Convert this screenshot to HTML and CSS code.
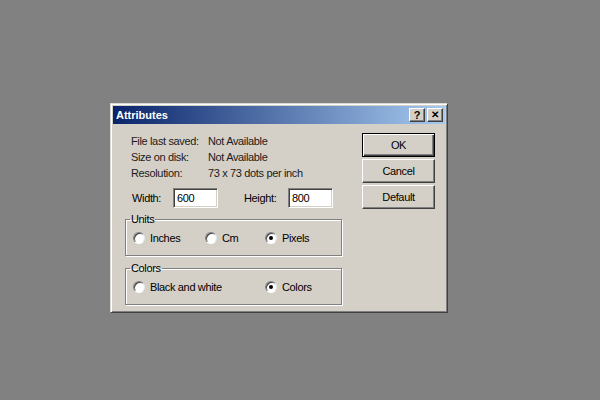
FILE: index.html
```html
<!DOCTYPE html>
<html>
<head>
<meta charset="utf-8">
<link rel="stylesheet" href="styles.css">
</head>
<body>
<div class="dialog">
  <div class="titlebar">
    <span class="title">Attributes</span>
    <div class="tbtns">
      <span class="tbtn">?</span>
      <span class="tbtn x">✕</span>
    </div>
  </div>
  <div class="content">
    <div class="left">
      <div class="info">
        <span>File last saved:</span><span>Not Available</span>
        <span>Size on disk:</span><span>Not Available</span>
        <span>Resolution:</span><span>73 x 73 dots per inch</span>
      </div>
      <div class="dims">
        <label class="lw">Width:</label><span class="input">600</span>
        <label class="lh">Height:</label><span class="input">800</span>
      </div>
      <fieldset class="group">
        <legend>Units</legend>
        <div class="radios">
          <span class="radio r1"><i class="dot"></i>Inches</span>
          <span class="radio r2"><i class="dot"></i>Cm</span>
          <span class="radio r3"><i class="dot on"></i>Pixels</span>
        </div>
      </fieldset>
      <fieldset class="group">
        <legend>Colors</legend>
        <div class="radios">
          <span class="radio r4"><i class="dot"></i>Black and white</span>
          <span class="radio r3"><i class="dot on"></i>Colors</span>
        </div>
      </fieldset>
    </div>
    <div class="buttons">
      <span class="btn default">OK</span>
      <span class="btn">Cancel</span>
      <span class="btn">Default</span>
    </div>
  </div>
</div>
</body>
</html>
```

FILE: styles.css
```css
html, body { margin: 0; padding: 0; }
body {
  background: #818181;
  width: 600px;
  height: 400px;
  padding: 103px 0 0 110px;
  box-sizing: border-box;
  font-family: "Liberation Sans", Arial, sans-serif;
  font-size: 11px;
  letter-spacing: -0.35px;
  color: #000;
}
.dialog {
  width: 338px;
  height: 210px;
  box-sizing: border-box;
  background: #d4d0c8;
  border: 1px solid;
  border-color: #dcdad4 #404040 #404040 #dcdad4;
  box-shadow: inset 1px 1px 0 #fff, inset -1px -1px 0 #808080;
  padding: 2px;
}
.titlebar {
  height: 18px;
  background: linear-gradient(to right, #0a246a, #a6caf0);
  display: flex;
  align-items: center;
  justify-content: space-between;
  padding: 0 2px 0 3px;
}
.title {
  color: #fff;
  font-weight: bold;
  font-size: 11px;
  letter-spacing: 0;
}
.tbtns { display: flex; gap: 2px; }
.tbtn {
  width: 16px;
  height: 14px;
  box-sizing: border-box;
  background: #d4d0c8;
  border: 1px solid;
  border-color: #fff #404040 #404040 #fff;
  box-shadow: inset -1px -1px 0 #808080;
  display: flex;
  align-items: center;
  justify-content: center;
  font-weight: bold;
  font-size: 11px;
  line-height: 1;
  letter-spacing: 0;
}
.tbtn.x { font-size: 10px; }
.content {
  display: flex;
  justify-content: space-between;
  padding: 9px 10px 0 12px;
}
.left { width: 217px; }
.info {
  display: grid;
  grid-template-columns: 77px auto;
  line-height: 16px;
  padding-left: 6px;
  color: #1a1a1a;
}
.dims {
  display: flex;
  align-items: center;
  margin-top: 7px;
  padding-left: 7px;
}
.lw { width: 41px; }
.lh { width: 44px; margin-left: 26px; }
.input {
  width: 45px;
  height: 20px;
  box-sizing: border-box;
  background: #fff;
  border: 1px solid;
  border-color: #808080 #fff #fff #808080;
  box-shadow: inset 1px 1px 0 #404040, inset -1px -1px 0 #d4d0c8;
  padding: 3px 0 0 3px;
}
.group {
  margin: 6px 0 0 0;
  padding: 0;
  height: 42px;
  box-sizing: border-box;
  border: 1px solid #808080;
  box-shadow: 1px 1px 0 #fff, inset 1px 1px 0 #fff;
}
.group + .group { margin-top: 7px; }
.group legend {
  padding: 0 1px;
  margin-left: 4px;
  line-height: 11px;
}
.radios {
  display: flex;
  align-items: center;
  padding: 5px 0 0 7px;
  height: 16px;
}
.radio { display: flex; align-items: center; }
.r1 { width: 72px; }
.r2 { width: 60px; }
.r4 { width: 132px; }
.dot {
  width: 12px;
  height: 12px;
  box-sizing: border-box;
  border-radius: 50%;
  background: #fff;
  border: 1px solid;
  border-color: #808080 #e8e8e8 #fff #808080;
  box-shadow: inset 1px 1px 0 #404040;
  margin-right: 5px;
  position: relative;
}
.dot.on::after {
  content: "";
  position: absolute;
  left: 3px;
  top: 3px;
  width: 4px;
  height: 4px;
  border-radius: 50%;
  background: #000;
}
.buttons {
  display: flex;
  flex-direction: column;
  gap: 2px;
  padding-top: 0;
}
.btn {
  width: 73px;
  height: 24px;
  box-sizing: border-box;
  background: #d4d0c8;
  border: 1px solid;
  border-color: #fff #404040 #404040 #fff;
  box-shadow: inset -1px -1px 0 #808080;
  display: flex;
  align-items: center;
  justify-content: center;
}
.btn.default {
  border: 1px solid #000;
  box-shadow: inset 1px 1px 0 #fff, inset -1px -1px 0 #404040, inset -2px -2px 0 #808080;
}
```
